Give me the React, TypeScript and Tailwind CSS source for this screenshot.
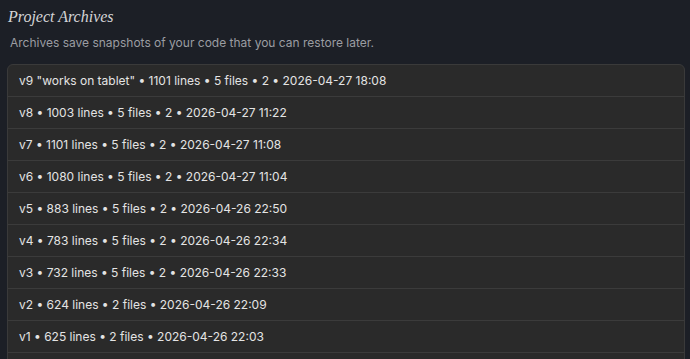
import { Component } from 'react';

type Archive = { id: string; label: string };

export class App extends Component {
    archives: Archive[] = [
        { id: 'v9', label: 'v9 "works on tablet" • 1101 lines • 5 files • 2 • 2026-04-27 18:08' },
        { id: 'v8', label: 'v8 • 1003 lines • 5 files • 2 • 2026-04-27 11:22' },
        { id: 'v7', label: 'v7 • 1101 lines • 5 files • 2 • 2026-04-27 11:08' },
        { id: 'v6', label: 'v6 • 1080 lines • 5 files • 2 • 2026-04-27 11:04' },
        { id: 'v5', label: 'v5 • 883 lines • 5 files • 2 • 2026-04-26 22:50' },
        { id: 'v4', label: 'v4 • 783 lines • 5 files • 2 • 2026-04-26 22:34' },
        { id: 'v3', label: 'v3 • 732 lines • 5 files • 2 • 2026-04-26 22:33' },
        { id: 'v2', label: 'v2 • 624 lines • 2 files • 2026-04-26 22:09' },
        { id: 'v1', label: 'v1 • 625 lines • 2 files • 2026-04-26 22:03' },
        { id: 'v0', label: 'v0 • 612 lines • 2 files • 2026-04-26 21:58' },
    ];

    render() {
        return (
            <div className="h-[359px] overflow-hidden bg-[#1c1f26] pl-[7px] pr-[5px] pt-[5px] font-['Inter',sans-serif]">
                <h1 className="pl-[1px] font-['Liberation_Serif',serif] text-[16px] italic leading-[24px] text-[#d4d4d6]">
                    Project Archives
                </h1>
                <p className="mt-[5px] pl-[3px] text-[12px] leading-[18px] text-[#9b9da2]">
                    Archives save snapshots of your code that you can restore later.
                </p>
                <div className="mt-[12px] overflow-hidden rounded-[6px] border border-[#3a3a3a] bg-[#2a2a2a]">
                    {this.archives.map((a) => (
                        <div
                            key={a.id}
                            className="flex h-[32px] items-center border-b border-[#3b3b3b] pl-[11px] text-[12px] text-[#e4e4e4]"
                        >
                            {a.label}
                        </div>
                    ))}
                </div>
            </div>
        );
    }
}

export default App;
